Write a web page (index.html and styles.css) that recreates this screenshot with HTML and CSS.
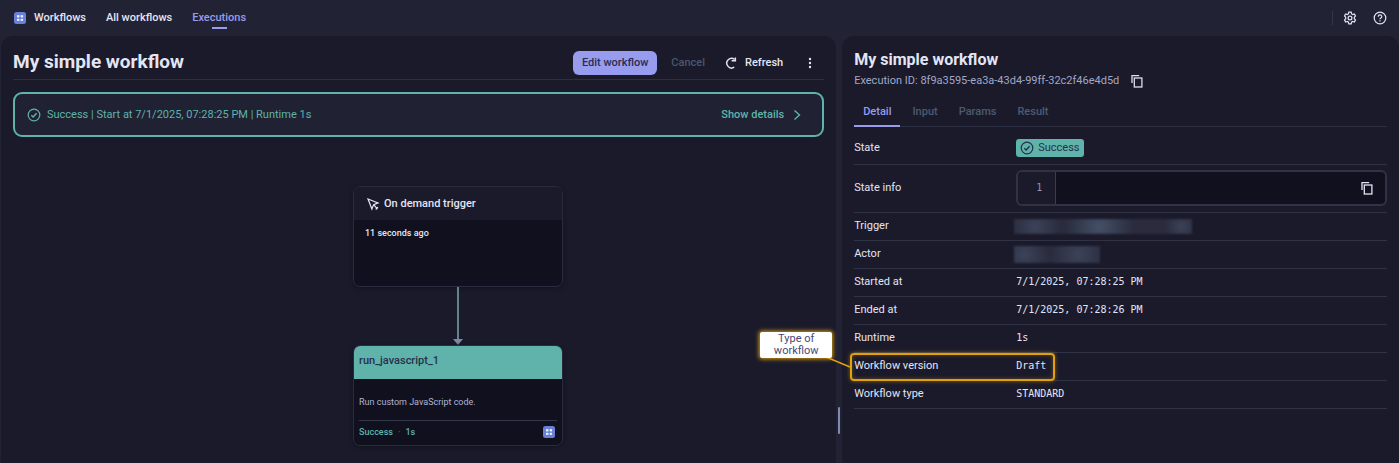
FILE: index.html
```html
<!DOCTYPE html>
<html lang="en">
<head>
    <meta charset="UTF-8">
    <meta name="viewport" content="width=device-width, initial-scale=1.0">
    <title>Workflows - Executions</title>
    <link rel="stylesheet" href="styles.css">
</head>
<body>
<svg class="defs" aria-hidden="true">
    <symbol id="app" viewBox="0 0 12 12">
        <rect width="12" height="12" rx="2.5" fill="#6880d8"/>
        <path d="M3 4.2h2.4M3 7.9h2.4M6.7 4.2h2.4M6.7 7.9h2.4" stroke="#fff" stroke-width="1.9"/>
        <path d="M4.2 4v4M7.9 4v4" stroke="#c6cef5" stroke-width=".6"/>
    </symbol>
    <symbol id="check" viewBox="0 0 14 14" fill="none" stroke="currentColor" stroke-width="1.2">
        <circle cx="7" cy="7" r="5.8"/>
        <path d="M4.3 7.3l1.8 1.7 3.5-3.8" stroke-width="1.5"/>
    </symbol>
    <symbol id="copy" viewBox="0 0 14 14" fill="none" stroke="currentColor" stroke-width="1.3">
        <path d="M2 9V1.7h7.2"/>
        <rect x="4.3" y="4" width="7.6" height="9"/>
    </symbol>
</svg>

<header class="topbar">
    <nav class="nav">
        <a href="#" class="brand"><svg class="icon-sm"><use href="#app"/></svg>Workflows</a>
        <a href="#">All workflows</a>
        <a href="#" class="current">Executions</a>
    </nav>
    <div class="tools">
        <button aria-label="Settings">
            <svg class="icon" viewBox="0 0 14 14" fill="none" stroke="currentColor" stroke-width="1.2">
                <path d="M5.8 1.2h2.4l.4 1.7 1 .6 1.7-.5 1.2 2-1.2 1.3v1.4l1.2 1.3-1.2 2-1.7-.5-1 .6-.4 1.7H5.8l-.4-1.7-1-.6-1.7.5-1.2-2 1.2-1.3V6.3L1.5 5l1.2-2 1.7.5 1-.6z"/>
                <circle cx="7" cy="7" r="1.9"/>
            </svg>
        </button>
        <button aria-label="Help">
            <svg class="icon" viewBox="0 0 14 14" fill="none" stroke="currentColor" stroke-width="1.2">
                <circle cx="7" cy="7" r="5.8"/>
                <path d="M5.2 5.7c0-2.3 3.6-2.3 3.6-.1C8.8 6.9 7 6.9 7 8.2M7 9.3v1.2"/>
            </svg>
        </button>
    </div>
</header>

<main class="main">
    <section class="panel flow">
        <div class="flow-header">
            <h1>My simple workflow</h1>
            <div class="actions">
                <button class="btn primary">Edit workflow</button>
                <button class="btn" disabled>Cancel</button>
                <button class="btn">
                    <svg class="icon" viewBox="0 0 14 14" fill="none" stroke="currentColor" stroke-width="1.4">
                        <path d="M9.2 11.2A4.8 4.8 0 1 1 9.6 3.4"/>
                        <path d="M6.6 4.8h3.8V1.4"/>
                    </svg>
                    Refresh
                </button>
                <button class="btn more" aria-label="More">
                    <svg class="icon" viewBox="0 0 14 14" fill="currentColor">
                        <circle cx="7" cy="3" r="1.2"/><circle cx="7" cy="7" r="1.2"/><circle cx="7" cy="11" r="1.2"/>
                    </svg>
                </button>
            </div>
        </div>

        <div class="status">
            <svg class="icon"><use href="#check"/></svg>
            <span>Success | Start at 7/1/2025, 07:28:25 PM | Runtime 1s</span>
            <button class="details">
                Show details
                <svg class="icon" viewBox="0 0 14 14" fill="none" stroke="currentColor" stroke-width="1.4"><path d="M4.5 2.5L9.5 7l-5 4.5"/></svg>
            </button>
        </div>

        <div class="canvas">
            <article class="node trigger">
                <h2>
                    <svg class="icon" viewBox="0 0 14 14" fill="none" stroke="currentColor" stroke-width="1.2">
                        <path d="M2 2l10 3.9-4.4 1.7L5.9 12zM7.6 7.6l3.9 4.4M9.7 12.5l2.3-2.3"/>
                    </svg>
                    On demand trigger
                </h2>
                <p>11 seconds ago</p>
            </article>
            <svg class="edge" viewBox="0 0 12 58">
                <path d="M6 0v53" stroke="#66818e" stroke-width="2"/>
                <path d="M1 52h10l-5 6z" fill="#8088a6"/>
            </svg>
            <article class="node task">
                <h2>run_javascript_1</h2>
                <p>Run custom JavaScript code.</p>
                <footer>
                    <span>Success</span><span class="dot">·</span><span>1s</span>
                    <svg class="icon-sm"><use href="#app"/></svg>
                </footer>
            </article>
        </div>
    </section>

    <div class="splitter"><span></span></div>

    <aside class="panel detail">
        <h2>My simple workflow</h2>
        <div class="exec-id">
            <span>Execution ID: 8f9a3595-ea3a-43d4-99ff-32c2f46e4d5d</span>
            <button aria-label="Copy execution ID"><svg class="icon"><use href="#copy"/></svg></button>
        </div>
        <div class="tabs" role="tablist">
            <button role="tab" aria-selected="true">Detail</button>
            <button role="tab">Input</button>
            <button role="tab">Params</button>
            <button role="tab">Result</button>
        </div>
        <table class="props">
            <tr class="state">
                <th>State</th>
                <td><span class="chip"><svg class="icon"><use href="#check"/></svg>Success</span></td>
            </tr>
            <tr class="info">
                <th>State info</th>
                <td>
                    <div class="code">
                        <span class="line">1</span>
                        <button aria-label="Copy state info"><svg class="icon"><use href="#copy"/></svg></button>
                    </div>
                </td>
            </tr>
            <tr><th>Trigger</th><td><span class="redacted wide"></span></td></tr>
            <tr><th>Actor</th><td><span class="redacted"></span></td></tr>
            <tr><th>Started at</th><td>7/1/2025, 07:28:25 PM</td></tr>
            <tr><th>Ended at</th><td>7/1/2025, 07:28:26 PM</td></tr>
            <tr><th>Runtime</th><td>1s</td></tr>
            <tr>
                <th class="noted">
                    Workflow version
                    <span class="mark"></span>
                    <svg class="pointer" viewBox="0 0 26 12"><path d="M1 1l24 10" stroke="#e0a010" stroke-width="1.5"/></svg>
                    <span class="note">Type of workflow</span>
                </th>
                <td>Draft</td>
            </tr>
            <tr><th>Workflow type</th><td>STANDARD</td></tr>
        </table>
    </aside>
</main>
</body>
</html>
```

FILE: styles.css
```css
* { margin: 0; padding: 0; box-sizing: border-box; }
body { display: flex; flex-direction: column; height: 100vh; overflow: hidden; background: #222235; color: #e4e5f4; font: 500 11px/16px Roboto, "Noto Sans", sans-serif; }
a { color: inherit; text-decoration: none; }
button { display: flex; align-items: center; background: none; border: none; color: inherit; font: inherit; cursor: pointer; }
.defs { position: absolute; width: 0; height: 0; }
.icon { width: 14px; height: 14px; flex: none; }
.icon-sm { width: 12px; height: 12px; flex: none; }

.topbar { display: flex; justify-content: space-between; align-items: center; height: 36px; flex: none; padding: 0 12px 0 14px; }
.nav { display: flex; gap: 20px; }
.nav a { display: flex; align-items: center; height: 22px; border-bottom: 2px solid transparent; padding-top: 2px; }
.nav .brand { gap: 8px; }
.nav .current { color: #989cee; background: linear-gradient(#989cee, #989cee) center bottom / 15px 2px no-repeat; border: none; padding-bottom: 2px; }
.tools { display: flex; gap: 16px; border-left: 1px solid #33354a; padding-left: 10px; }

.main { display: grid; grid-template-columns: 3fr 6px 2fr; flex: 1; min-height: 0; padding-left: 1px; }
.panel { background: #1a1a2b; border-radius: 12px 12px 0 0; min-width: 0; }
.flow { padding: 0 12px; display: flex; flex-direction: column; }
.flow-header { display: flex; justify-content: space-between; align-items: center; height: 44px; flex: none; padding-top: 8px; border-bottom: 1px solid #2d2f42; }
h1 { font-size: 19px; line-height: 24px; }
.actions { display: flex; align-items: center; padding-top: 2px; }
.btn { height: 24px; padding: 0 9px; gap: 6px; border-radius: 6px; }
.btn.primary { background: #989cee; color: #2a2c52; margin-right: 5px; }
.btn:disabled { color: #4b576c; margin-right: 2px; }
.btn.more { padding: 0 7px; margin-left: 4px; }

.status { display: flex; align-items: center; gap: 6px; height: 45px; flex: none; margin-top: 12px; padding: 0 18px 0 12px; border: 2px solid #5fb3ab; border-radius: 9px; background: #202233; color: #5fb3ab; font-weight: 400; }
.details { gap: 6px; margin-left: auto; font-weight: 500; }

.canvas { position: relative; flex: 1; }
.node { position: absolute; left: 340px; width: 210px; height: 101px; border: 1px solid #2a2b3e; border-radius: 7px; background: #10101f; overflow: hidden; box-shadow: 0 1px 4px #12131f; font-size: 9px; }
.node h2 { display: flex; align-items: center; gap: 4px; height: 33px; font-size: 11px; font-weight: 500; }
.trigger { top: 49px; }
.trigger h2 { padding: 0 12px; background: #1a1a2b; }
.trigger p { padding: 5px 11px; }
.task { top: 208px; }
.task h2 { padding: 0 5px 3px; background: #5fb3ab; color: #25314a; }
.task p { padding: 15px 5px 10px; color: #b0b4d0; font-weight: 400; }
.task footer { display: flex; align-items: center; gap: 5px; height: 22px; margin: 0 5px; padding-right: 2px; border-top: 1px solid #34364a; color: #5fb3ab; }
.task footer .icon-sm { margin-left: auto; }
.task .dot { color: #4b576c; }
.edge { position: absolute; left: 439px; top: 150px; width: 12px; height: 58px; }

.splitter { display: flex; justify-content: center; align-items: flex-end; padding-bottom: 29px; }
.splitter span { width: 2px; height: 27px; border-radius: 1px; background: #8389ac; }

.detail { padding: 15px 12px 0; }
.detail h2 { font-size: 16px; line-height: 18px; }
.exec-id { display: flex; align-items: center; gap: 11px; height: 22px; padding-top: 2px; color: #a3a7c6; font-weight: 400; }
.exec-id button { color: #dcdef0; }
.tabs { display: flex; gap: 3px; height: 36px; border-bottom: 1px solid #2d2f42; }
.tabs button { height: 36px; padding: 8px 9px 0; border-bottom: 2px solid transparent; color: #4e5a70; }
.tabs [aria-selected] { color: #989cee; border-color: #989cee; }

.props { width: 100%; border-collapse: collapse; table-layout: fixed; }
.props tr { height: 28px; border-bottom: 1px solid #303246; }
.props .state { height: 37px; }
.props .state th, .props .state td { padding-top: 5px; }
.props .info { height: 48px; }
.props th { width: 162px; text-align: left; font-weight: 400; }
.props td { font: 10px/16px "DejaVu Sans Mono", monospace; }
.props .chip { display: inline-flex; align-items: center; gap: 4px; height: 18px; padding: 0 4px; border-radius: 3px; vertical-align: middle; background: #5fb3ab; color: #25314a; font: 400 11px/16px Roboto, "Noto Sans", sans-serif; }
.code { display: flex; justify-content: space-between; height: 36px; padding-right: 11px; border: 2px solid #303246; border-radius: 6px; background: #10101f; }
.code .line { display: flex; align-items: center; justify-content: flex-end; width: 38px; padding-right: 13px; border-right: 1px solid #3a3c50; border-radius: 5px 0 0 5px; background: #1a1a2b; color: #8f94b4; }
.redacted { display: block; width: 86px; height: 17px; margin-left: -2px; background: radial-gradient(circle at 12% 50%, #465068a0, transparent 25px), radial-gradient(circle at 75% 50%, #465068a0, transparent 28px), #2a2c3e; filter: blur(1px); }
.redacted.wide { width: 178px; height: 15px; background: radial-gradient(circle at 12% 50%, #465068a0, transparent 25px), radial-gradient(circle at 48% 50%, #506078b0, transparent 34px), radial-gradient(circle at 94% 50%, #465068a0, transparent 16px), #2a2c3e; }

.noted { position: relative; }
.mark { position: absolute; left: -4px; top: 0; width: 205px; height: 28px; border: 2px solid #e0a010; border-radius: 4px; box-shadow: 0 0 4px #e0a01090, inset 0 0 4px #e0a01060; }
.pointer { position: absolute; left: -29px; top: 3px; width: 26px; height: 12px; }
.note { position: absolute; left: -94px; top: -21px; width: 72px; height: 26px; padding: 1px 10px; border-radius: 2px; background: #fff; color: #444a7a; box-shadow: 0 0 4px 1px #e0a010; line-height: 12px; text-align: center; }
```
